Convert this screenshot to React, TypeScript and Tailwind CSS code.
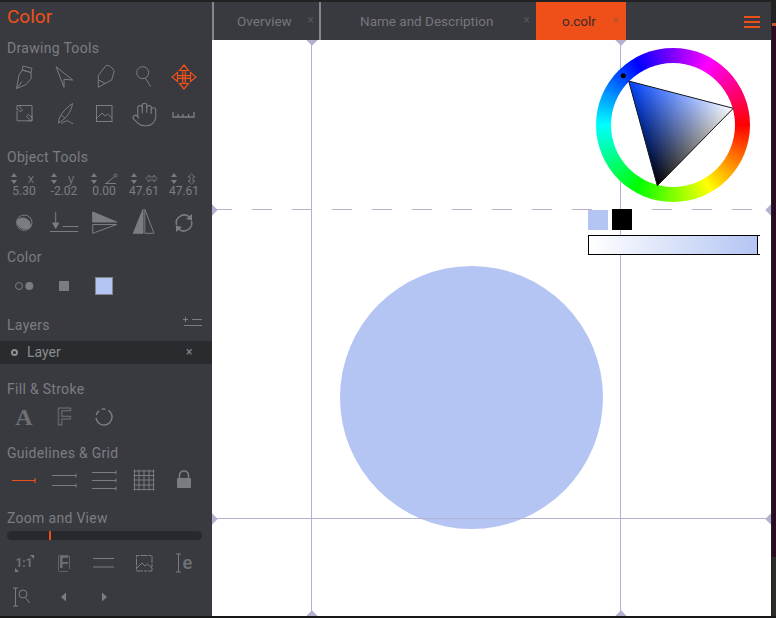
import React from "react";
import { Hand } from "lucide-react";

const G = "#7b7c80";
const O = "#ef5019";

function I({ children, w = 30, h = 30 }: { children: React.ReactNode; w?: number; h?: number }) {
  return (
    <svg width={w} height={h} viewBox={`0 0 ${w} ${h}`} fill="none" stroke={G} strokeWidth={1} className="shrink-0">
      {children}
    </svg>
  );
}

function Title({ children }: { children: React.ReactNode }) {
  return <div className="h-[18px] pl-[7px] text-[14px] leading-[18px] tracking-[0.3px] text-[#7c7d82]">{children}</div>;
}

function Row({ children, className = "" }: { children: React.ReactNode; className?: string }) {
  return <div className={`grid grid-cols-[repeat(5,40px)] pl-1 justify-items-center items-center ${className}`}>{children}</div>;
}

function Spin({ label, value, icon }: { label?: string; value: string; icon?: React.ReactNode }) {
  return (
    <div className="w-10 flex flex-col items-center">
      <div className="relative h-[13px] w-10 flex items-center justify-center">
        <svg width="6" height="11" viewBox="0 0 6 11" className="absolute left-[6.5px] top-[1px]" fill={G}>
          <path d="M3 0 6 4H0zM3 11 0 7h6z" />
        </svg>
        <span className="ml-[14px] text-[13px] leading-[12px] font-light text-[#85868a] flex items-center h-[12px]">{label ?? icon}</span>
      </div>
      <div className="text-[12px] leading-[13px] text-[#7c7d82]">{value}</div>
    </div>
  );
}

function foot(a: number[], b: number[], c: number[]) {
  const dx = c[0] - b[0];
  const dy = c[1] - b[1];
  const t = ((a[0] - b[0]) * dx + (a[1] - b[1]) * dy) / (dx * dx + dy * dy);
  return [b[0] + t * dx, b[1] + t * dy];
}

function Wheel() {
  const B = [32.7, 33];
  const W = [137.3, 60.3];
  const K = [61.3, 137.7];
  const fb = foot(B, W, K);
  const fw = foot(W, B, K);
  const pts = `${B} ${W} ${K}`;
  return (
    <div className="absolute left-[596px] top-[48px] w-[154px] h-[154px] rounded-full bg-[conic-gradient(from_90deg,#f00,#ff0,#0f0,#0ff,#00f,#f0f,#f00)] flex items-center justify-center">
      <div className="w-[124px] h-[124px] rounded-full bg-white" />
      <svg width="154" height="154" viewBox="0 0 154 154" className="absolute left-0 top-0 isolate">
        <defs>
          <linearGradient id="gb" gradientUnits="userSpaceOnUse" x1={B[0]} y1={B[1]} x2={fb[0]} y2={fb[1]}>
            <stop offset="0" stopColor="#0044ff" />
            <stop offset="1" stopColor="#000" />
          </linearGradient>
          <linearGradient id="gw" gradientUnits="userSpaceOnUse" x1={W[0]} y1={W[1]} x2={fw[0]} y2={fw[1]}>
            <stop offset="0" stopColor="#fff" />
            <stop offset="1" stopColor="#000" />
          </linearGradient>
        </defs>
        <polygon points={pts} fill="url(#gb)" />
        <polygon points={pts} fill="url(#gw)" className="mix-blend-plus-lighter" />
        <polygon points={pts} fill="none" stroke="#222" strokeWidth={1} />
        <circle cx="27.3" cy="27.7" r="2.5" fill="#000" />
      </svg>
    </div>
  );
}

function Diamond({ className }: { className: string }) {
  return <div className={`absolute w-2 h-2 rotate-45 bg-[#b3b0d0] ${className}`} />;
}

function Tab({ label, width, active, pl, xr }: { label: string; width: number; active?: boolean; pl: number; xr: number }) {
  return (
    <div
      style={{ width, paddingLeft: pl }}
      className={`relative h-full flex items-center text-[13.5px] ${active ? "bg-[#ef5019] text-[#3a2a28]" : "text-[#75767b] border-l-2 border-[#85868a]"}`}
    >
      {label}
      <span
        style={{ right: xr }}
        className={`absolute top-[11px] text-[12px] leading-[14px] ${active ? "text-[#b5502c]" : "text-[#55565a]"}`}
      >
        ×
      </span>
    </div>
  );
}

export default function App() {
  return (
    <div className="relative w-[776px] h-[618px] overflow-hidden bg-[#181818] font-['Roboto',sans-serif] flex flex-col">
      <div className="h-[2px] bg-[#222] shrink-0" />
      <div className="flex h-[614px] shrink-0">
        {/* Sidebar */}
        <aside className="w-[212px] shrink-0 bg-[#393a40] flex flex-col overflow-hidden">
          <div className="h-[30px] pl-[7px] text-[19px] leading-[30px] text-[#ef5019]">Color</div>
          <div className="mt-[7px]"><Title>Drawing Tools</Title></div>
          <Row className="mt-[5px] h-[30px]">
            <I><path d="M7.5 26.5 10 13l3.5-5 8.5 2.5.2 6-5 6zM7.5 26.5l5.5-7" /><path d="M14 4l9 2.3-1 4.2-8.8-2.5z" /></I>
            <I><path d="M7 4.7 23.7 18l-8.7-.7v8z" /></I>
            <I><path d="M9.3 25.3V13.5L17 3.5c3-.7 7.5 2.5 8 6.2l-2.3 8.3zM9.6 18l6.4 3.4" /></I>
            <I><circle cx="13.7" cy="10.7" r="6" /><path d="M16.3 16l5.4 8.7" /></I>
            <I>
              <g stroke={O} strokeWidth={1.2}>
                <path d="M15 3l4.500 5.500h-9zM15 27l-4.500-5.500h9zM3 15l5.500-4.500v9zM27 15l-5.500 4.500v-9z" />
                <path d="M8.500 13.700h13M8.500 16.300h13M13.700 8.500v13M16.300 8.500v13" />
              </g>
            </I>
          </Row>
          <Row className="mt-[7px] h-[30px]">
            <I>
              <path d="M12 6.5h11v15.3H13M8 18v-6" />
              <path d="M8 6.5h4l-1.5 1.5 3 3-2 2-3-3L8 11zM23 21.8h-4l1.5-1.5-3-3 2-2 3 3 .5-1.5z" />
              <path d="M8 18v3.8h5" />
            </I>
            <I><path d="M23.5 4.5C23 10 19 17 14 21l-4.5 3 .7-5C13 13 19 7.500 23.500 4.500zM12.500 16l3.500 3.500" /><path d="M12 24.500c3-1.500 5-3 7-2.500 2 .5 3 2.500 5 2.500" /></I>
            <I><rect x="7.500" y="6.500" width="15.500" height="16" /><path d="M8 19l5-5 3 3 2.500-2 4.500 4" /></I>
            <Hand size={27} strokeWidth={1} color={G} />
            <I><path d="M4 13v5h21v-5M9 15v3M14 15v3M19.500 15v3" strokeWidth={1.300} /></I>
          </Row>
          <div className="mt-[19px]"><Title>Object Tools</Title></div>
          <Row className="mt-[6px]">
            <Spin label="x" value="5.30" />
            <Spin label="y" value="-2.02" />
            <Spin
              value="0.00"
              icon={
                <svg width="13" height="11" viewBox="0 0 13 11" fill="none" stroke={G}>
                  <path d="M0 10.500h11M1 10.500 9 4" />
                  <circle cx="10.500" cy="2.500" r="1.500" />
                </svg>
              }
            />
            <Spin
              value="47.61"
              icon={
                <svg width="13" height="11" viewBox="0 0 13 11" fill="none" stroke={G} strokeWidth={0.8}>
                  <path d="M1 5.500 4 2v2h5V2l3 3.500L9 9V7H4v2z" />
                </svg>
              }
            />
            <Spin
              value="47.61"
              icon={
                <svg width="11" height="12" viewBox="0 0 11 12" fill="none" stroke={G} strokeWidth={0.8}>
                  <path d="M5.500 1 9 4H7v4h2l-3.500 3L2 8h2V4H2z" />
                </svg>
              }
            />
          </Row>
          <Row className="mt-[10px] h-[30px]">
            <I><circle cx="15.300" cy="14.700" r="7.700" /><path d="M7.600 12.500A8 8 0 0 1 21.500 19.500 8.500 8.500 0 0 1 7.600 12.500z" fill={G} stroke="none" /></I>
            <I><path d="M1 23.500h28.300M13.700 18.500h15.600M6.700 3.700v13" /><path d="M3.700 15l3 5.300 3-5.300z" fill={G} /></I>
            <I><path d="M3.700 4 27.700 14H3.700z" fill={G} /><path d="M3.700 16.500h24L3.700 25.300z" /></I>
            <I><path d="M14 1.300v24H4.300z" fill={G} /><path d="M15.800 1.300v24H25z" /></I>
            <I>
              <path d="M7.500 17A8 8 0 0 1 21 9.500M22.500 13A8 8 0 0 1 9 20.500" strokeWidth={1.500} />
              <path d="M23 6v6.500l-6-1.500zM7 24v-6.500l6 1.500z" fill={G} stroke="none" />
            </I>
          </Row>
          <div className="mt-[10px]"><Title>Color</Title></div>
          <Row className="mt-[5px] h-[30px]">
            <I><circle cx="10" cy="15" r="3.500" /><circle cx="20.300" cy="15" r="4" fill={G} stroke="none" /></I>
            <div className="w-[10px] h-[10px] bg-[#7b7c80]" />
            <div className="w-[18px] h-[18px] bg-[#b4c5f3] border border-[#85868a]" />
          </Row>
          <div className="mt-[15px] relative">
            <Title>Layers</Title>
            <svg width="20" height="10" viewBox="0 0 20 10" fill="none" stroke={G} className="absolute left-[183px] top-[0px]">
              <path d="M1 9.500h18M9 3.500h10M0 3.500h5M2.500 1v5" />
            </svg>
          </div>
          <div className="mt-[7px] h-[23px] bg-[#2a2b2f] relative flex items-center">
            <span className="ml-[11px] w-[7px] h-[7px] rounded-full border-2 border-[#8e8f93]" />
            <span className="ml-[9px] text-[14px] text-[#8a8b8f]">Layer</span>
            <span className="absolute left-[186px] top-[4px] text-[12px] leading-[14px] text-[#8a8b8f]">×</span>
          </div>
          <div className="mt-[16px]"><Title>Fill &amp; Stroke</Title></div>
          <Row className="mt-[4px] h-[30px]">
            <span className="font-['Liberation_Serif',serif] font-bold text-[24px] leading-[30px] text-[#6e6f73]">A</span>
            <span className="font-['Liberation_Sans',sans-serif] font-bold text-[24px] leading-[30px] text-transparent [-webkit-text-stroke:1px_#6e6f73]">F</span>
            <I><circle cx="15" cy="15" r="8" strokeWidth={1.500} strokeDasharray="24 3 5 3 4 3" /></I>
          </Row>
          <div className="mt-[12px]"><Title>Guidelines &amp; Grid</Title></div>
          <Row className="mt-[3px] h-[30px]">
            <I><path d="M3 15.500h23M26 13v5" stroke={O} strokeWidth={1.200} /></I>
            <I><path d="M3 10.500h24M3 20.500h24M27 8.500v4M27 18.500v4" /></I>
            <I><path d="M3 7.500h24M3 15.500h24M3 23.500h24M27 5.500v4M27 13.500v4M27 21.500v4" /></I>
            <I>
              <path d="M5.500 4.500v21M10 4.500v21M15 4.500v21M20 4.500v21M24.500 4.500v21M4.500 6h21M4.500 10.500h21M4.500 15h21M4.500 20h21M4.500 24.500h21" />
            </I>
            <I>
              <path d="M10.500 14v-3.500c0-6 9-6 9 0V14" strokeWidth={1.600} />
              <rect x="8" y="13" width="14" height="10" rx="1" fill={G} stroke="none" />
            </I>
          </Row>
          <div className="mt-[14px]"><Title>Zoom and View</Title></div>
          <div className="relative ml-[7px] mt-[4px] h-[9px] w-[195px] rounded-full bg-[#28292d]">
            <div className="absolute left-[42px] top-0 h-[9px] w-[2px] bg-[#ef5019]" />
          </div>
          <Row className="mt-[8px] h-[30px]">
            <div className="relative w-[30px] h-[30px] flex items-center justify-center text-[12px] font-bold text-[#6e6f73]">
              1:1
              <svg width="30" height="30" viewBox="0 0 30 30" fill={G} className="absolute inset-0">
                <path d="M21 7h4v4zM6 24v-4l4 4z" />
              </svg>
            </div>
            <div className="relative w-[30px] h-[30px] flex items-center justify-center font-['Liberation_Sans',sans-serif] font-bold text-[16px] text-[#6e6f73]">
              F
              <svg width="30" height="30" viewBox="0 0 30 30" fill="none" stroke={G} className="absolute inset-0">
                <path d="M10 7.500h10M10 23.500h9M20.500 8v13M9.500 8v15" strokeOpacity={0.6} />
              </svg>
            </div>
            <I><path d="M4 10.500h21M4 19h21" /></I>
            <I><rect x="7.500" y="7.500" width="15.500" height="15.500" strokeDasharray="3 1 7 1" /><path d="M8 20l5-5 3 3 2.500-2 4.500 4" /></I>
            <div className="relative w-[30px] h-[30px] flex items-center justify-center font-['Liberation_Sans',sans-serif] font-bold text-[18px] text-[#6e6f73]">
              <span className="ml-[7px]">e</span>
              <svg width="30" height="30" viewBox="0 0 30 30" fill="none" stroke={G} className="absolute inset-0">
                <path d="M9.500 6v18M7 6h5M7 24h5" />
              </svg>
            </div>
          </Row>
          <Row className="mt-[4px] h-[30px]">
            <I>
              <path d="M6.500 6v18M4 6h5M4 24h5" />
              <circle cx="14" cy="12" r="4" />
              <path d="M16.500 15.500l4 5.500" />
            </I>
            <I><path d="M12 15l5-4.500v9z" fill={G} stroke="none" /></I>
            <I><path d="M18 15l-5-4.500v9z" fill={G} stroke="none" /></I>
          </Row>
        </aside>

        {/* Main */}
        <main className="flex flex-col w-[559px] shrink-0">
          <div className="h-[38px] shrink-0 bg-[#393a40] flex relative">
            <Tab label="Overview" width={107} pl={23} xr={5} />
            <Tab label="Name and Description" width={217} pl={39} xr={6} />
            <Tab label="o.colr" width={90} pl={26} xr={7} active />
            <div className="absolute left-[532px] top-[14px] w-[16px] flex flex-col gap-[3px]">
              <div className="h-[2px] bg-[#ef5019]" />
              <div className="h-[2px] bg-[#ef5019]" />
              <div className="h-[2px] bg-[#ef5019]" />
            </div>
          </div>
          <div className="flex-1 bg-white" />
        </main>
        <div className="flex-1 flex flex-col border-l border-[#222]">
          <div className="h-[21px] bg-[#222]" />
          <div className="h-[3px] bg-[#c8552a]" />
          <div className="flex-1 bg-[#2c0a22]" />
          <div className="h-[59px] bg-[#2b2b29]" />
        </div>
      </div>

      {/* Free canvas overlays */}
      <div className="absolute left-[212px] top-[40px] w-[559px] h-[576px] overflow-hidden">
        <div className="absolute left-[128px] top-[226px] w-[263px] h-[263px] rounded-full bg-[#b4c5f3]" />
        <div className="absolute left-[99px] top-0 h-full w-px bg-[#b3b0d0]" />
        <div className="absolute left-[408px] top-0 h-full w-px bg-[#b3b0d0]" />
        <div className="absolute left-0 top-[478px] w-full h-px bg-[#b3b0d0]" />
        <div className="absolute left-0 top-[169px] w-full h-px bg-[repeating-linear-gradient(90deg,#b8b0c8_0_20px,transparent_20px_40px)]" />
        <Diamond className="left-[95.500px] -top-1" />
        <Diamond className="left-[404.500px] -top-1" />
        <Diamond className="left-[95.500px] -bottom-1" />
        <Diamond className="left-[404.500px] -bottom-1" />
        <Diamond className="-left-1 top-[474.500px]" />
        <Diamond className="-right-1 top-[474.500px]" />
        <Diamond className="-left-1 top-[165.500px]" />
        <Diamond className="-right-1 top-[165.500px]" />
      </div>

      <Wheel />
      <div className="absolute left-[588px] top-[210px] w-5 h-5 bg-[#b4c5f3]" />
      <div className="absolute left-[612px] top-[209px] w-5 h-[21px] bg-black" />
      <div className="absolute left-[588px] top-[235px] w-[170px] h-5 border border-black bg-[linear-gradient(90deg,#fff,#b4c5f3)]" />
      <div className="absolute left-[755px] top-[235px] w-[5px] h-5 border-y border-black flex justify-center">
        <div className="w-px bg-black" />
      </div>
    </div>
  );
}
